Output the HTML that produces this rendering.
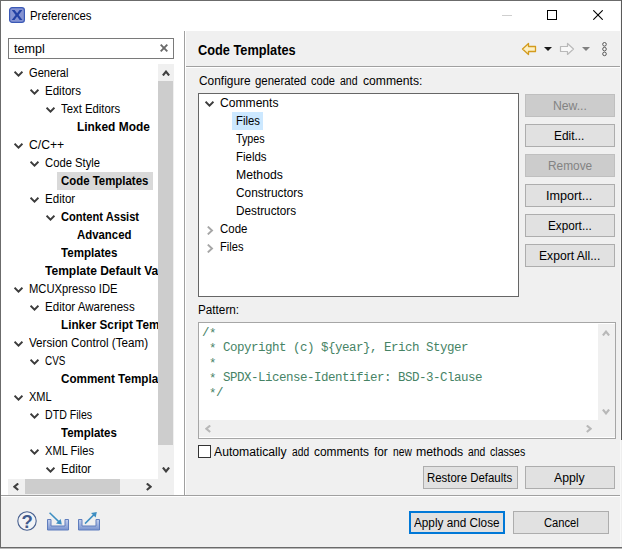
<!DOCTYPE html>
<html>
<head>
<meta charset="utf-8">
<title>Preferences</title>
<style>
html,body{margin:0;padding:0;}
body{width:622px;height:549px;overflow:hidden;position:relative;background:#f0f0f0;font-family:"Liberation Sans",sans-serif;font-size:12px;color:#000;}
.abs{position:absolute;}
.t{position:absolute;white-space:nowrap;line-height:18px;height:18px;transform-origin:0 50%;}
.chev{position:absolute;width:9px;height:6px;}
.btn{position:absolute;box-sizing:border-box;height:23px;border:1px solid #adadad;background:#e1e1e1;}
.btn.dis{background:#cccccc;border-color:#bfbfbf;}
.code{position:absolute;left:202px;font-family:"Liberation Mono",monospace;font-size:12.5px;letter-spacing:-0.5px;line-height:15px;height:15px;white-space:pre;color:#468365;}
</style>
</head>
<body>
<div class="abs" style="left:0;top:0;width:622px;height:549px;background:#f0f0f0;"></div>
<!-- title bar -->
<div class="abs" style="left:1px;top:1px;width:620px;height:30px;background:#fff;"></div>
<!-- left pane white -->
<div class="abs" style="left:1px;top:31px;width:183px;height:464px;background:#fff;"></div>
<!-- sash line -->
<div class="abs" style="left:184px;top:31px;width:1px;height:464px;background:#a0a0a0;"></div>
<div class="abs" style="left:185px;top:31px;width:1px;height:464px;background:#fff;"></div>
<!-- header separator -->
<div class="abs" style="left:186px;top:66px;width:435px;height:1px;background:#a0a0a0;"></div>
<div class="abs" style="left:186px;top:67px;width:435px;height:1px;background:#fff;"></div>
<!-- bottom separator -->
<div class="abs" style="left:1px;top:495px;width:620px;height:1px;background:#a0a0a0;"></div>
<div class="abs" style="left:1px;top:496px;width:620px;height:1px;background:#fff;"></div>

<!-- title icon -->
<svg class="abs" style="left:9px;top:7px" width="16" height="16" viewBox="0 0 16 16">
<rect x="0.6" y="0.6" width="14.8" height="14.8" rx="2.6" fill="#8593d2" stroke="#3b59b6" stroke-width="1.2"/>
<path d="M2.8 2.9 L5.6 2.9 L8.1 6.3 L10.6 2.9 L13.4 2.9 L9.6 7.9 L13.5 12.9 L10.7 12.9 L8.1 9.5 L5.5 12.9 L2.7 12.9 L6.6 7.9 Z" fill="#2241a4"/>
</svg>

<!-- window controls -->
<div class="abs" style="left:502px;top:15px;width:10px;height:1px;background:#cfcfcf;"></div>
<div class="abs" style="left:547px;top:10px;width:10px;height:10px;box-sizing:border-box;border:1px solid #000;"></div>
<svg class="abs" style="left:593px;top:10px" width="10" height="10" viewBox="0 0 10 10"><path d="M0.3 0.3 L9.7 9.7 M9.7 0.3 L0.3 9.7" stroke="#000" stroke-width="1.1" fill="none"/></svg>

<!-- search box -->
<div class="abs" style="left:8px;top:38px;width:166px;height:21px;box-sizing:border-box;border:1px solid #7a7a7a;background:#fff;"></div>
<svg class="abs" style="left:160px;top:44px" width="8" height="8" viewBox="0 0 8 8"><path d="M0.7 0.7 L7.3 7.3 M7.3 0.7 L0.7 7.3" stroke="#6a6a6a" stroke-width="1.9" fill="none"/></svg>

<!-- left tree selection -->
<div class="abs" style="left:57px;top:172px;width:96px;height:18px;background:#d9d9d9;"></div>

<!-- left tree -->
<div id="ltree" class="abs" style="left:0;top:0;width:158px;height:478px;overflow:hidden;">
<svg class="chev" style="left:14px;top:71px" viewBox="0 0 9 6"><path d="M0.6 0.7 L4.5 4.6 L8.4 0.7" stroke="#3c3c3c" stroke-width="1.9" fill="none"/></svg>
<svg class="chev" style="left:30px;top:89px" viewBox="0 0 9 6"><path d="M0.6 0.7 L4.5 4.6 L8.4 0.7" stroke="#3c3c3c" stroke-width="1.9" fill="none"/></svg>
<svg class="chev" style="left:46px;top:107px" viewBox="0 0 9 6"><path d="M0.6 0.7 L4.5 4.6 L8.4 0.7" stroke="#3c3c3c" stroke-width="1.9" fill="none"/></svg>
<svg class="chev" style="left:14px;top:143px" viewBox="0 0 9 6"><path d="M0.6 0.7 L4.5 4.6 L8.4 0.7" stroke="#3c3c3c" stroke-width="1.9" fill="none"/></svg>
<svg class="chev" style="left:30px;top:161px" viewBox="0 0 9 6"><path d="M0.6 0.7 L4.5 4.6 L8.4 0.7" stroke="#3c3c3c" stroke-width="1.9" fill="none"/></svg>
<svg class="chev" style="left:30px;top:197px" viewBox="0 0 9 6"><path d="M0.6 0.7 L4.5 4.6 L8.4 0.7" stroke="#3c3c3c" stroke-width="1.9" fill="none"/></svg>
<svg class="chev" style="left:46px;top:215px" viewBox="0 0 9 6"><path d="M0.6 0.7 L4.5 4.6 L8.4 0.7" stroke="#3c3c3c" stroke-width="1.9" fill="none"/></svg>
<svg class="chev" style="left:14px;top:287px" viewBox="0 0 9 6"><path d="M0.6 0.7 L4.5 4.6 L8.4 0.7" stroke="#3c3c3c" stroke-width="1.9" fill="none"/></svg>
<svg class="chev" style="left:30px;top:305px" viewBox="0 0 9 6"><path d="M0.6 0.7 L4.5 4.6 L8.4 0.7" stroke="#3c3c3c" stroke-width="1.9" fill="none"/></svg>
<svg class="chev" style="left:14px;top:341px" viewBox="0 0 9 6"><path d="M0.6 0.7 L4.5 4.6 L8.4 0.7" stroke="#3c3c3c" stroke-width="1.9" fill="none"/></svg>
<svg class="chev" style="left:30px;top:359px" viewBox="0 0 9 6"><path d="M0.6 0.7 L4.5 4.6 L8.4 0.7" stroke="#3c3c3c" stroke-width="1.9" fill="none"/></svg>
<svg class="chev" style="left:14px;top:395px" viewBox="0 0 9 6"><path d="M0.6 0.7 L4.5 4.6 L8.4 0.7" stroke="#3c3c3c" stroke-width="1.9" fill="none"/></svg>
<svg class="chev" style="left:30px;top:413px" viewBox="0 0 9 6"><path d="M0.6 0.7 L4.5 4.6 L8.4 0.7" stroke="#3c3c3c" stroke-width="1.9" fill="none"/></svg>
<svg class="chev" style="left:30px;top:449px" viewBox="0 0 9 6"><path d="M0.6 0.7 L4.5 4.6 L8.4 0.7" stroke="#3c3c3c" stroke-width="1.9" fill="none"/></svg>
<svg class="chev" style="left:46px;top:467px" viewBox="0 0 9 6"><path d="M0.6 0.7 L4.5 4.6 L8.4 0.7" stroke="#3c3c3c" stroke-width="1.9" fill="none"/></svg>
<div class="t" style="left:29.00px;top:64px;transform:scaleX(0.8886);font-size:12.5px;">General</div>
<div class="t" style="left:45.00px;top:82px;transform:scaleX(0.9237);font-size:12.5px;">Editors</div>
<div class="t" style="left:61.00px;top:100px;transform:scaleX(0.9077);font-size:12.5px;">Text Editors</div>
<div class="t" style="left:77.00px;top:118px;transform:scaleX(0.9533);font-weight:bold;font-size:12.5px;">Linked Mode</div>
<div class="t" style="left:29.00px;top:136px;transform:scaleX(0.9750);font-size:12.5px;">C/C++</div>
<div class="t" style="left:45.00px;top:154px;transform:scaleX(0.9016);font-size:12.5px;">Code Style</div>
<div class="t" style="left:61.00px;top:172px;transform:scaleX(0.9135);font-weight:bold;font-size:12.5px;">Code Templates</div>
<div class="t" style="left:45.00px;top:190px;transform:scaleX(0.9250);font-size:12.5px;">Editor</div>
<div class="t" style="left:61.00px;top:208px;transform:scaleX(0.8898);font-weight:bold;font-size:12.5px;">Content Assist</div>
<div class="t" style="left:77.00px;top:226px;transform:scaleX(0.9119);font-weight:bold;font-size:12.5px;">Advanced</div>
<div class="t" style="left:61.00px;top:244px;transform:scaleX(0.9262);font-weight:bold;font-size:12.5px;">Templates</div>
<div class="t" style="left:45.00px;top:262px;transform:scaleX(0.9610);font-weight:bold;font-size:12.5px;">Template Default Values</div>
<div class="t" style="left:29.00px;top:280px;transform:scaleX(0.8979);font-size:12.5px;">MCUXpresso IDE</div>
<div class="t" style="left:45.00px;top:298px;transform:scaleX(0.9240);font-size:12.5px;">Editor Awareness</div>
<div class="t" style="left:61.00px;top:316px;transform:scaleX(0.9398);font-weight:bold;font-size:12.5px;">Linker Script Templates</div>
<div class="t" style="left:29.00px;top:334px;transform:scaleX(0.9313);font-size:12.5px;">Version Control (Team)</div>
<div class="t" style="left:45.00px;top:352px;transform:scaleX(0.7920);font-size:12.5px;">CVS</div>
<div class="t" style="left:61.00px;top:370px;transform:scaleX(0.9346);font-weight:bold;font-size:12.5px;">Comment Templates</div>
<div class="t" style="left:29.00px;top:388px;transform:scaleX(0.8808);font-size:12.5px;">XML</div>
<div class="t" style="left:45.00px;top:406px;transform:scaleX(0.8481);font-size:12.5px;">DTD Files</div>
<div class="t" style="left:61.00px;top:424px;transform:scaleX(0.9164);font-weight:bold;font-size:12.5px;">Templates</div>
<div class="t" style="left:45.00px;top:442px;transform:scaleX(0.8891);font-size:12.5px;">XML Files</div>
<div class="t" style="left:61.00px;top:460px;transform:scaleX(0.9250);font-size:12.5px;">Editor</div>
</div>

<!-- left vertical scrollbar -->
<div class="abs" style="left:158px;top:64px;width:16px;height:431px;background:#f0f0f0;"></div>
<div class="abs" style="left:158px;top:81px;width:15px;height:364px;background:#cdcdcd;"></div>
<svg class="abs" style="left:161.5px;top:70px" width="8" height="6" viewBox="0 0 8 6"><path d="M0.9 5.5 L4 1.6 L7.1 5.5" stroke="#404040" stroke-width="2.1" fill="none"/></svg>
<svg class="abs" style="left:161.5px;top:467px" width="8" height="6" viewBox="0 0 8 6"><path d="M0.9 0.5 L4 4.4 L7.1 0.5" stroke="#404040" stroke-width="2.1" fill="none"/></svg>
<!-- left horizontal scrollbar -->
<div class="abs" style="left:8px;top:479px;width:166px;height:16px;background:#f0f0f0;"></div>
<div class="abs" style="left:25px;top:479px;width:95px;height:15px;background:#cdcdcd;"></div>
<svg class="abs" style="left:13px;top:483px" width="6" height="8" viewBox="0 0 6 8"><path d="M5.2 0.5 L1.4 3.75 L5.2 7" stroke="#404040" stroke-width="2.1" fill="none"/></svg>
<svg class="abs" style="left:146px;top:483px" width="6" height="8" viewBox="0 0 6 8"><path d="M0.8 0.5 L4.6 3.75 L0.8 7" stroke="#404040" stroke-width="2.1" fill="none"/></svg>

<!-- toolbar icons -->
<svg class="abs" style="left:521px;top:41px" width="16" height="16" viewBox="0 0 16 16"><path d="M1.5 8 L7.5 2.5 L7.5 5.5 L14.5 5.5 L14.5 10.5 L7.5 10.5 L7.5 13.5 Z" fill="#fdf0c4" stroke="#d39b1d" stroke-width="1.3" stroke-linejoin="round"/></svg>
<svg class="abs" style="left:544px;top:47px" width="8" height="4" viewBox="0 0 8 4"><path d="M0 0 L8 0 L4 4 Z" fill="#1a1a1a"/></svg>
<svg class="abs" style="left:559px;top:41px" width="16" height="16" viewBox="0 0 16 16"><path d="M14.5 8 L8.5 2.5 L8.5 5.5 L1.5 5.5 L1.5 10.5 L8.5 10.5 L8.5 13.5 Z" fill="#f8f8f8" stroke="#b9b9b9" stroke-width="1.2" stroke-linejoin="round"/></svg>
<svg class="abs" style="left:582px;top:47px" width="8" height="4" viewBox="0 0 8 4"><path d="M0 0 L8 0 L4 4 Z" fill="#808080"/></svg>
<svg class="abs" style="left:600.7px;top:41px" width="7" height="16" viewBox="0 0 7 16"><g fill="#f6f6f6" stroke="#555" stroke-width="1"><circle cx="3.5" cy="3.3" r="1.8"/><circle cx="3.5" cy="8.1" r="1.8"/><circle cx="3.5" cy="12.9" r="1.8"/></g></svg>

<!-- tree box -->
<div class="abs" style="left:198px;top:93px;width:321px;height:204px;box-sizing:border-box;border:1px solid #666;background:#fff;"></div>
<div class="abs" style="left:232px;top:112px;width:31px;height:18px;background:#cce8ff;"></div>
<svg class="chev" style="left:205px;top:101px" viewBox="0 0 9 6"><path d="M0.6 0.7 L4.5 4.6 L8.4 0.7" stroke="#3c3c3c" stroke-width="1.9" fill="none"/></svg>
<svg class="abs" style="left:207px;top:226px" width="7" height="9" viewBox="0 0 7 9"><path d="M0.8 0.6 L5 4.5 L0.8 8.4" stroke="#a6a6a6" stroke-width="1.9" fill="none"/></svg>
<svg class="abs" style="left:207px;top:244px" width="7" height="9" viewBox="0 0 7 9"><path d="M0.8 0.6 L5 4.5 L0.8 8.4" stroke="#a6a6a6" stroke-width="1.9" fill="none"/></svg>

<!-- side buttons -->
<div class="btn dis" style="left:525px;top:94px;width:90px;"></div>
<div class="btn" style="left:525px;top:124px;width:90px;"></div>
<div class="btn dis" style="left:525px;top:154px;width:90px;"></div>
<div class="btn" style="left:525px;top:184px;width:90px;"></div>
<div class="btn" style="left:525px;top:214px;width:90px;"></div>
<div class="btn" style="left:525px;top:244px;width:90px;"></div>

<!-- pattern box -->
<div class="abs" style="left:198px;top:322px;width:418px;height:117px;box-sizing:border-box;border:1px solid #a6a6a6;background:#fff;"></div>
<div class="abs" style="left:199px;top:420px;width:416px;height:17px;background:#f0f0f0;"></div>
<div class="abs" style="left:598px;top:324px;width:17px;height:113px;background:#f0f0f0;"></div>
<svg class="abs" style="left:601.5px;top:329.5px" width="8" height="6" viewBox="0 0 8 6"><path d="M0.9 5.5 L4 1.6 L7.1 5.5" stroke="#b8b8b8" stroke-width="2.1" fill="none"/></svg>
<svg class="abs" style="left:601.5px;top:409px" width="8" height="6" viewBox="0 0 8 6"><path d="M0.9 0.5 L4 4.4 L7.1 0.5" stroke="#b8b8b8" stroke-width="2.1" fill="none"/></svg>
<svg class="abs" style="left:205px;top:424.5px" width="6" height="8" viewBox="0 0 6 8"><path d="M5.2 0.5 L1.4 3.75 L5.2 7" stroke="#b8b8b8" stroke-width="2.1" fill="none"/></svg>
<svg class="abs" style="left:586px;top:424.5px" width="6" height="8" viewBox="0 0 6 8"><path d="M0.8 0.5 L4.6 3.75 L0.8 7" stroke="#b8b8b8" stroke-width="2.1" fill="none"/></svg>
<div class="code" style="top:326px;">/<span style="position:relative;top:1px">*</span></div>
<div class="code" style="top:341px;"> <span style="position:relative;top:1px">*</span> Copyright (c) ${year}, Erich Styger</div>
<div class="code" style="top:356px;"> <span style="position:relative;top:1px">*</span></div>
<div class="code" style="top:371px;"> <span style="position:relative;top:1px">*</span> SPDX-License-Identifier: BSD-3-Clause</div>
<div class="code" style="top:386px;"> <span style="position:relative;top:1px">*</span>/</div>

<!-- checkbox -->
<div class="abs" style="left:198px;top:445px;width:13px;height:13px;box-sizing:border-box;border:1px solid #333;background:#fff;"></div>

<div class="btn" style="left:423px;top:466px;width:95px;"></div>
<div class="btn" style="left:525px;top:466px;width:90px;"></div>

<!-- bottom buttons -->
<div class="btn" style="left:409px;top:511px;width:96px;border:2px solid #0078d7;"></div>
<div class="btn" style="left:513px;top:511px;width:96px;"></div>

<!-- help icons -->
<svg class="abs" style="left:17px;top:511px" width="20" height="20" viewBox="0 0 20 20"><circle cx="10" cy="10" r="9.2" fill="#f2f3f6" stroke="#4a6291" stroke-width="1.1"/><text x="10.1" y="16.6" text-anchor="middle" font-family="Liberation Sans" font-weight="bold" font-size="18.5" fill="#3f5a8d">?</text></svg>
<svg class="abs" style="left:47px;top:511px" width="22" height="20" viewBox="0 0 22 20">
<defs><linearGradient id="tg" x1="0" y1="0" x2="0" y2="1"><stop offset="0" stop-color="#c4d1ee"/><stop offset="1" stop-color="#7a94cf"/></linearGradient></defs>
<path d="M0.5 8.5 H4 V15 H18 V8.5 H21.5 V19 H0.5 Z" fill="url(#tg)" stroke="#5f7dbd" stroke-width="1"/>
<path d="M2.6 1.7 L12 10.9" stroke="#3d8ec2" stroke-width="1.5" fill="none"/>
<path d="M14.8 13.6 L9 12.5 L13.7 7.9 Z" fill="#3d8ec2"/>
</svg>
<svg class="abs" style="left:78px;top:511px" width="22" height="20" viewBox="0 0 22 20">
<path d="M0.5 8.5 H4 V15 H18 V8.5 H21.5 V19 H0.5 Z" fill="url(#tg)" stroke="#5f7dbd" stroke-width="1"/>
<path d="M7 12.6 L16 3.6" stroke="#3d8ec2" stroke-width="1.5" fill="none"/>
<path d="M18.8 0.9 L13 2 L17.7 6.6 Z" fill="#3d8ec2"/>
</svg>

<div class="t" style="left:30.00px;top:7px;transform:scaleX(0.9121);font-size:12.5px;">Preferences</div>
<div class="t" style="left:14.00px;top:40px;transform:scaleX(1.0067);font-size:12.5px;">templ</div>
<div class="t" style="left:198.00px;top:41px;transform:scaleX(0.9112);font-weight:bold;font-size:14px;">Code Templates</div>
<div class="t" style="left:198.90px;top:72px;transform:scaleX(0.9519);font-size:12.5px;">Configure</div>
<div class="t" style="left:254.90px;top:72px;transform:scaleX(0.9143);font-size:12.5px;">generated</div>
<div class="t" style="left:311.30px;top:72px;transform:scaleX(0.8852);font-size:12.5px;">code</div>
<div class="t" style="left:339.60px;top:72px;transform:scaleX(0.8429);font-size:12.5px;">and</div>
<div class="t" style="left:363.00px;top:72px;transform:scaleX(0.9717);font-size:12.5px;">comments:</div>
<div class="t" style="left:220.00px;top:94px;transform:scaleX(0.9683);font-size:12.5px;">Comments</div>
<div class="t" style="left:236.00px;top:112px;transform:scaleX(0.9040);font-size:12.5px;">Files</div>
<div class="t" style="left:236.00px;top:130px;transform:scaleX(0.8606);font-size:12.5px;">Types</div>
<div class="t" style="left:236.00px;top:148px;transform:scaleX(0.9156);font-size:12.5px;">Fields</div>
<div class="t" style="left:236.00px;top:166px;transform:scaleX(0.9766);font-size:12.5px;">Methods</div>
<div class="t" style="left:236.00px;top:184px;transform:scaleX(0.9479);font-size:12.5px;">Constructors</div>
<div class="t" style="left:236.00px;top:202px;transform:scaleX(0.9413);font-size:12.5px;">Destructors</div>
<div class="t" style="left:220.00px;top:220px;transform:scaleX(0.9167);font-size:12.5px;">Code</div>
<div class="t" style="left:220.00px;top:238px;transform:scaleX(0.8920);font-size:12.5px;">Files</div>
<div class="t" style="left:198.00px;top:301px;transform:scaleX(0.9381);font-size:12.5px;">Pattern:</div>
<div class="t" style="left:214.40px;top:443px;transform:scaleX(0.9770);font-size:12.5px;">Automatically</div>
<div class="t" style="left:291.80px;top:443px;transform:scaleX(0.8190);font-size:12.5px;">add</div>
<div class="t" style="left:314.20px;top:443px;transform:scaleX(0.9534);font-size:12.5px;">comments</div>
<div class="t" style="left:374.40px;top:443px;transform:scaleX(0.9400);font-size:12.5px;">for</div>
<div class="t" style="left:392.88px;top:443px;transform:scaleX(0.8182);font-size:12.5px;">new</div>
<div class="t" style="left:415.81px;top:443px;transform:scaleX(0.9851);font-size:12.5px;">methods</div>
<div class="t" style="left:467.70px;top:443px;transform:scaleX(0.8238);font-size:12.5px;">and</div>
<div class="t" style="left:490.10px;top:443px;transform:scaleX(0.8452);font-size:12.5px;">classes</div>
<div class="t" style="left:552.52px;top:97px;transform:scaleX(0.9758);font-size:12.5px;color:#838383;">New...</div>
<div class="t" style="left:554.25px;top:127px;transform:scaleX(0.9500);font-size:12.5px;">Edit...</div>
<div class="t" style="left:547.55px;top:157px;transform:scaleX(0.9489);font-size:12.5px;color:#838383;">Remove</div>
<div class="t" style="left:546.29px;top:187px;transform:scaleX(1.0091);font-size:12.5px;">Import...</div>
<div class="t" style="left:547.56px;top:217px;transform:scaleX(0.9378);font-size:12.5px;">Export...</div>
<div class="t" style="left:539.43px;top:247px;transform:scaleX(0.9705);font-size:12.5px;">Export All...</div>
<div class="t" style="left:427.49px;top:469px;transform:scaleX(0.9141);font-size:12.5px;">Restore Defaults</div>
<div class="t" style="left:554.30px;top:469px;transform:scaleX(0.9806);font-size:12.5px;">Apply</div>
<div class="t" style="left:414.40px;top:514px;transform:scaleX(0.9396);font-size:12.5px;">Apply and Close</div>
<div class="t" style="left:543.50px;top:514px;transform:scaleX(0.8949);font-size:12.5px;">Cancel</div>

<!-- window borders -->
<div class="abs" style="left:0;top:0;width:622px;height:1px;background:#6b6b6b;"></div>
<div class="abs" style="left:0;top:0;width:1px;height:549px;background:#6b6b6b;"></div>
<div class="abs" style="left:620px;top:1px;width:1px;height:546px;background:#f8f8f8;"></div>
<div class="abs" style="left:621px;top:0;width:1px;height:440px;background:#5a5a5a;"></div>
<div class="abs" style="left:621px;top:440px;width:1px;height:107px;background:#eeeeee;"></div>
<div class="abs" style="left:0;top:547px;width:622px;height:1px;background:#6a6a6a;"></div>
<div class="abs" style="left:0;top:548px;width:622px;height:1px;background:#b8b8b8;"></div>
</body>
</html>
